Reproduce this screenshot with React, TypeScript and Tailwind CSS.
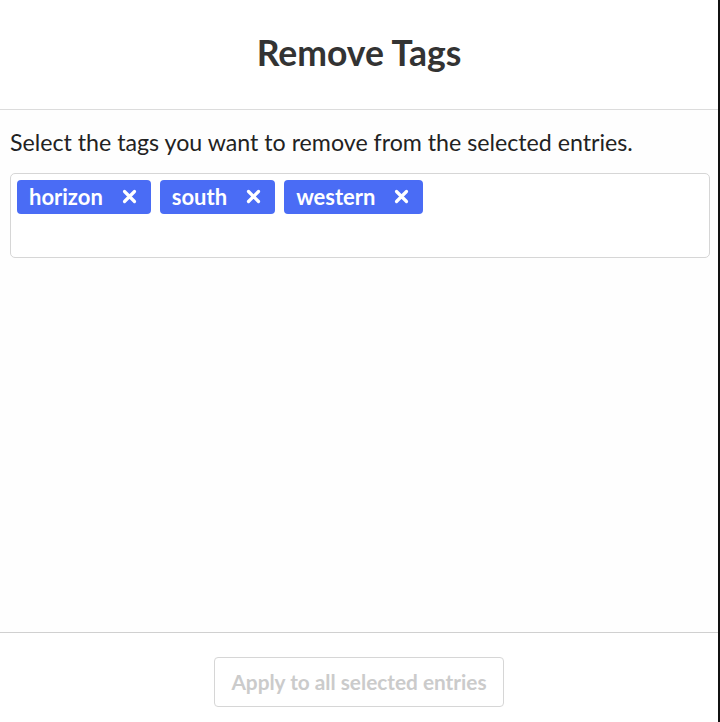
import React from "react";

const tags = ["horizon", "south", "western"];

function Tag({ label }: { label: string }) {
  return (
    <span className="flex h-[34px] items-center gap-[19px] rounded-[4px] bg-[#4a6cf5] pb-[1px] pl-[12px] pr-[14px] text-[22px] font-bold text-white">
      {label}
      <svg width="15" height="15" viewBox="0 0 15 15" aria-hidden>
        <path d="M2.5 2.5 L12.5 12.5 M12.5 2.5 L2.5 12.5" stroke="white" strokeWidth="3.2" strokeLinecap="round" />
      </svg>
    </span>
  );
}

export default function App() {
  return (
    <div className="flex h-[722px] w-[720px] bg-[#111]" style={{ fontFamily: "Lato, 'Open Sans', sans-serif" }}>
      <div className="flex w-[718px] flex-col bg-white">
        <header className="flex h-[110px] items-center justify-center border-b border-[#dcdcdc] pb-[4px]">
          <h1 className="text-[35.5px] font-bold text-[#333]">Remove Tags</h1>
        </header>
        <main className="flex flex-1 flex-col bg-[#fefefe] px-[10px] pt-[17px]">
          <p className="text-[23.2px] leading-[30px] text-[#222]">Select the tags you want to remove from the selected entries.</p>
          <div className="mt-[16px] flex h-[85px] w-[700px] items-start gap-[9px] rounded-[5px] border border-[#d6d6d6] bg-white px-[6px] pt-[6px]">
            {tags.map((t) => (
              <Tag key={t} label={t} />
            ))}
          </div>
        </main>
        <footer className="flex h-[90px] items-start justify-center border-t border-[#d0d0d0] pt-[24px]">
          <button className="h-[50px] w-[290px] rounded-[4px] border border-[#d6d6d6] bg-white text-[20.8px] font-bold text-[#cbcbcb]">
            Apply to all selected entries
          </button>
        </footer>
      </div>
    </div>
  );
}
